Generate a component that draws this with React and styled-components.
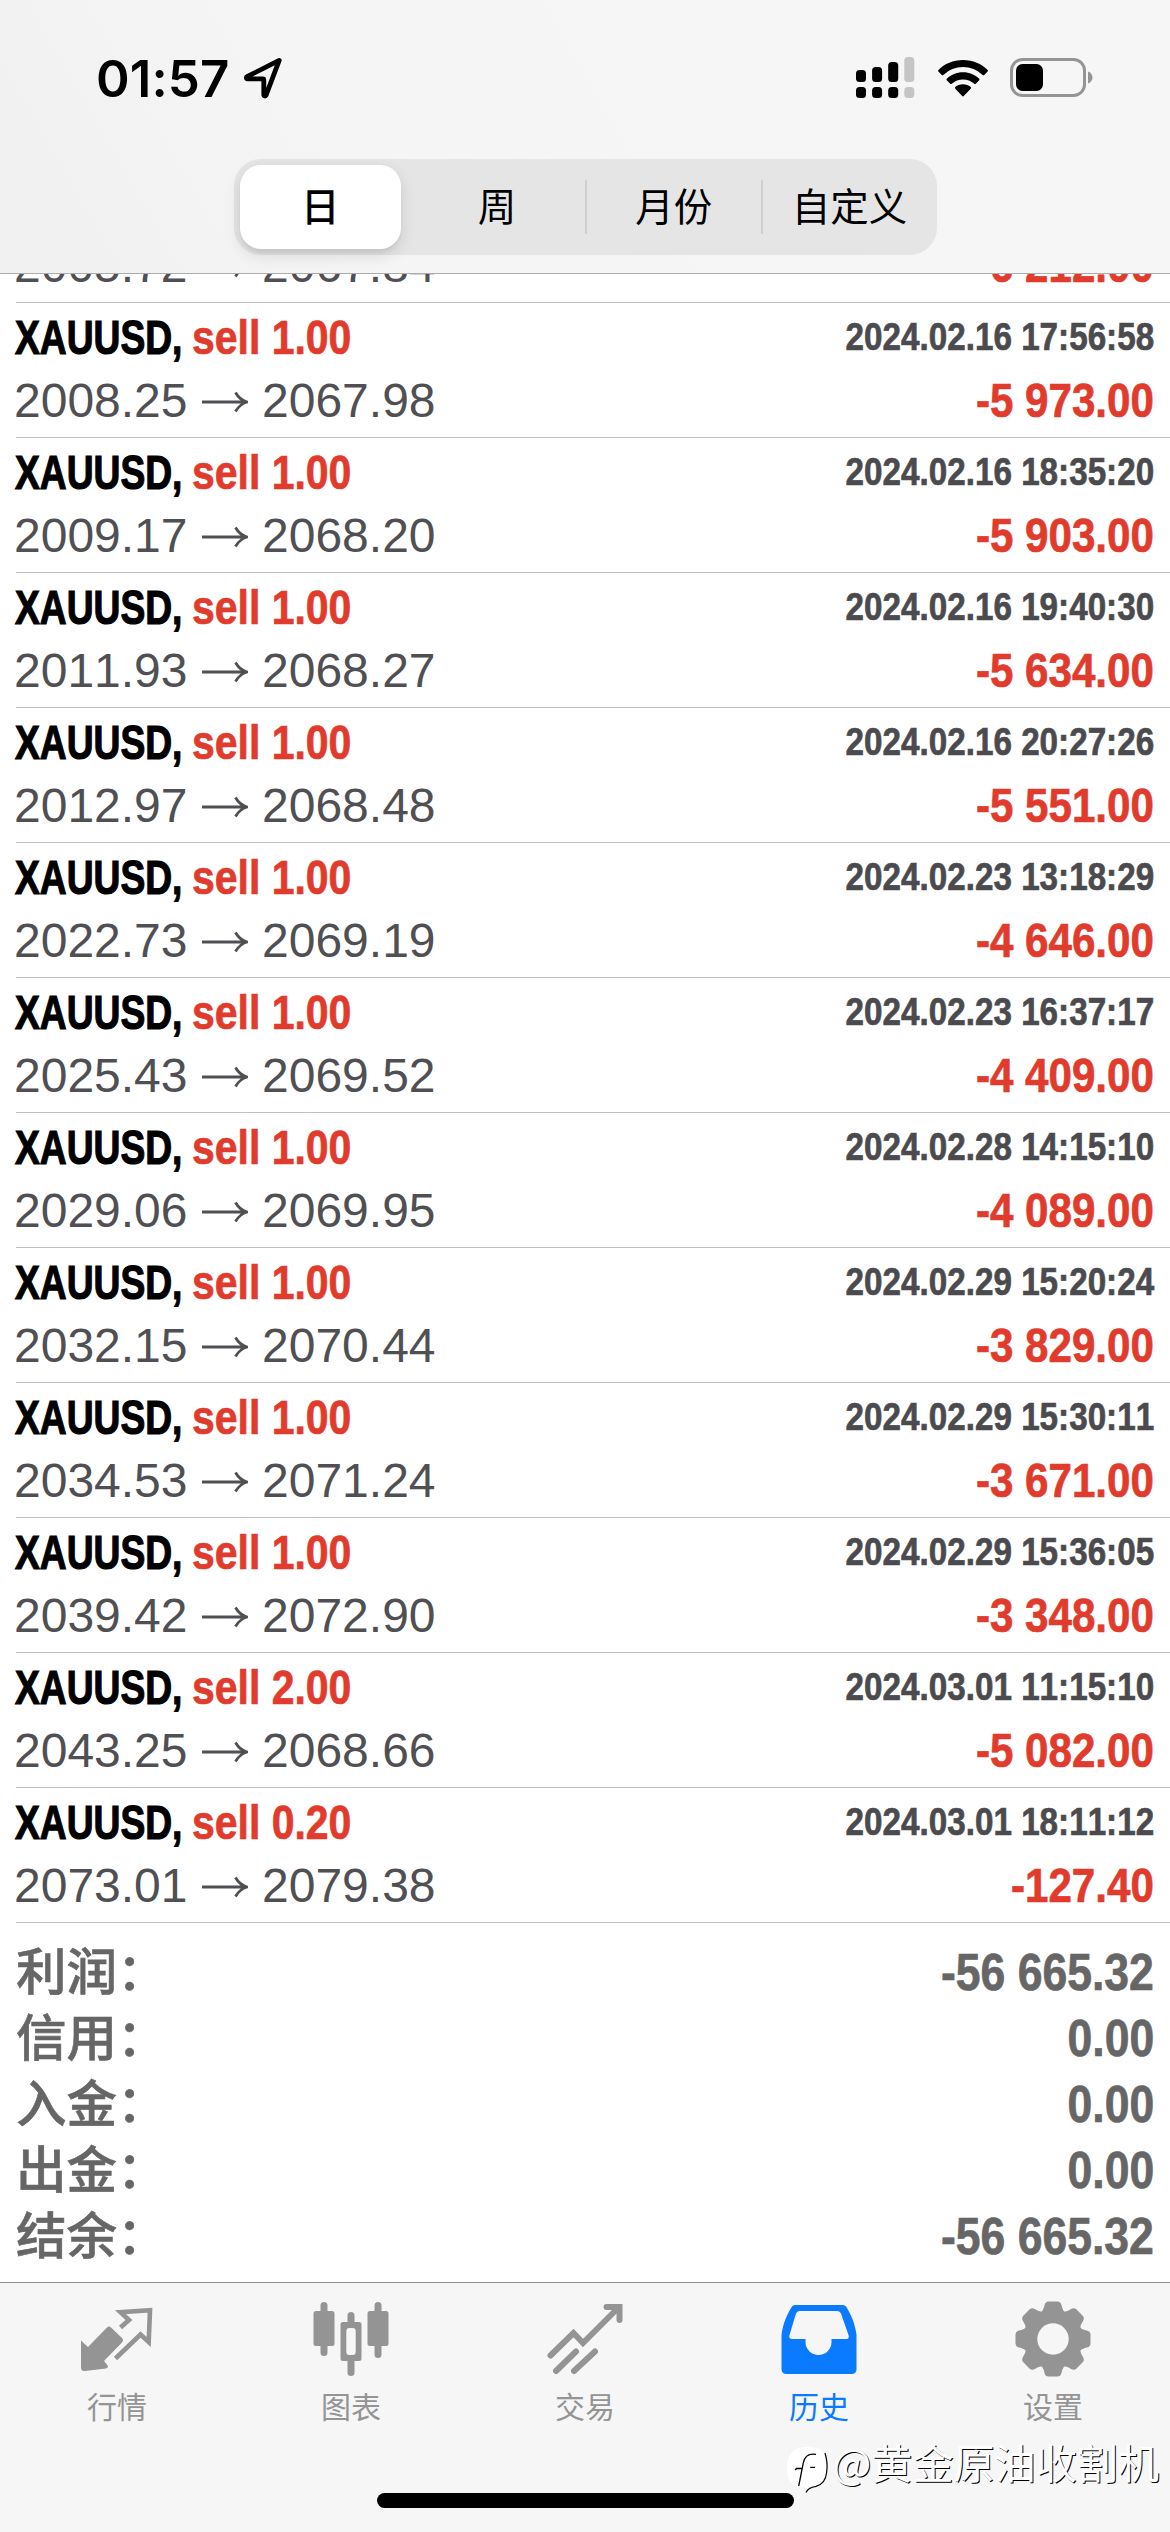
import React from "react";
import styled, { createGlobalStyle } from "styled-components";

const GlobalStyle = createGlobalStyle`
  html, body { margin: 0; padding: 0; background: #fff; }
  *, *::before, *::after { box-sizing: border-box; }
`;

const latin = `"Liberation Sans", "Noto Sans CJK SC", sans-serif`;
const cjk = `"Noto Sans CJK SC", sans-serif`;

const Screen = styled.div`
  width: 1170px;
  height: 2532px;
  display: flex;
  flex-direction: column;
  overflow: hidden;
  background: #fff;
  font-family: ${latin};
  font-kerning: none;
`;

const Header = styled.header`
  height: 274px;
  flex: none;
  display: flex;
  flex-direction: column;
  align-items: center;
  border-bottom: 1px solid #adadb0;
  background: linear-gradient(60deg, #f0f0f1 0%, #f5f5f5 30%, #f6f6f6 100%);
`;

const StatusBar = styled.div`
  width: 100%;
  height: 159px;
  flex: none;
  padding: 47px 77px 0 96px;
  display: flex;
  justify-content: space-between;
  align-items: flex-start;
`;

const StatusGroup = styled.div`
  height: 62px;
  display: flex;
  align-items: center;
  gap: ${(p) => p.$gap}px;
`;

const Clock = styled.span`
  font: 600 51px/62px Inter, sans-serif;
  letter-spacing: 0.1px;
  font-kerning: normal;
  color: #000;
  padding-top: 1px;
`;

const Segments = styled.nav`
  width: 703px;
  height: 96px;
  flex: none;
  display: grid;
  grid-template-columns: repeat(4, 1fr);
  border-radius: 27px;
  background: #e5e5e6;
  padding: 6px 0;
`;

const Segment = styled.button`
  appearance: none;
  border: 0;
  padding: 0;
  margin: ${(p) => (p.$active ? "0 8px 0 6px" : "0")};
  border-radius: 21px;
  background: ${(p) => (p.$active ? "#fff" : "transparent")};
  box-shadow: ${(p) => (p.$active ? "0 6px 16px rgba(0,0,0,.12), 0 4px 3px rgba(0,0,0,.04)" : "none")};
  font: ${(p) => (p.$active ? 500 : 400)} 38.5px/78px ${cjk};
  color: #000;
  display: flex;
  align-items: center;
  justify-content: center;
`;

const SegmentLabel = styled.span`
  flex: 1;
  text-align: center;
  padding-bottom: 6px;
`;

const Divider = styled.i`
  width: 2px;
  height: 54px;
  background: #cfcfd1;
`;

const History = styled.main`
  flex: 1;
  min-height: 0;
  display: flex;
  flex-direction: column;
  justify-content: flex-end;
  overflow: hidden;
`;

const Deal = styled.article`
  height: ${(p) => (p.$partial ? 69 : 135)}px;
  flex: none;
  margin-left: 16px;
  padding: ${(p) => (p.$partial ? 0 : 3)}px 16px 0 0;
  border-bottom: 1px solid #c1c1c3;
`;

const Line = styled.div`
  height: 63px;
  display: flex;
  justify-content: space-between;
`;

const Title = styled.div`
  display: flex;
`;

const Condensed = styled.span`
  display: block;
  white-space: nowrap;
  font-weight: 700;
  font-size: ${(p) => p.$size || 48}px;
  line-height: ${(p) => p.$line || 63}px;
  -webkit-text-stroke: 0.7px currentColor;
  transform: scaleX(${(p) => p.$scale});
  transform-origin: ${(p) => p.$origin || "left"} center;
`;

const SymbolName = styled(Condensed)`
  width: 177px;
  margin-left: -1px;
  color: #000;
  -webkit-text-stroke: 1.2px currentColor;
`;

const Side = styled(Condensed)`
  color: #e03b2c;
`;

const Stamp = styled(Condensed)`
  color: #4b4b4f;
`;

const Profit = styled(Condensed)`
  color: #e03b2c;
`;

const Prices = styled.div`
  display: flex;
  align-items: center;
  font-size: 48px;
  line-height: 63px;
  color: #505054;
  margin-left: -2px;
`;

const ArrowBox = styled.svg`
  width: 46px;
  height: 22px;
  margin: 2px 14px 0 14.5px;
  flex: none;
`;

const Totals = styled.section`
  height: 359px;
  flex: none;
  padding: 17px 16px 0 16px;
`;

const TotalRow = styled.div`
  height: 66px;
  display: flex;
  justify-content: space-between;
  color: #666;
`;

const TotalLabel = styled.span`
  font: 500 50.5px/57px ${cjk};
  -webkit-text-stroke: 0.6px currentColor;
`;

const TabBar = styled.footer`
  height: 250px;
  flex: none;
  position: relative;
  border-top: 1px solid #8f8f93;
  background: #f6f6f6;
  display: flex;
  flex-direction: column;
  align-items: center;
`;

const Tabs = styled.nav`
  width: 100%;
  height: 210px;
  flex: none;
  display: grid;
  grid-template-columns: repeat(5, 1fr);
`;

const Tab = styled.a`
  display: flex;
  flex-direction: column;
  align-items: center;
  padding-top: 18px;
  color: ${(p) => (p.$active ? "#0a7aff" : "#949494")};

  svg { width: 76px; height: 76px; margin-right: 1px; }
`;

const TabLabel = styled.span`
  margin-top: 6px;
  font: 400 30px/44px ${cjk};
`;

const HomeIndicator = styled.div`
  width: 417px;
  height: 15px;
  border-radius: 8px;
  background: #000;
`;

const Watermark = styled.div`
  position: absolute;
  right: 11px;
  top: 153px;
  height: 60px;
  display: flex;
  align-items: flex-start;
  gap: 3px;
  font: 400 41.1px/50px ${cjk};
  color: #fff;
  text-shadow: 1px 1px 0.5px #000;

  svg { margin-top: 9px; }
`;

const ClockArrow = () => (
  <svg width="40" height="42" viewBox="0 0 40 42">
    <path d="M36.2 3.4 4 19.6c-1 .6-.7 2.2.5 2.2h15.3c.6 0 1 .4 1 1v15c0 1.3 1.7 1.6 2.2.5Z" fill="none" stroke="#000" strokeWidth="4.8" strokeLinejoin="round" />
  </svg>
);

const Signal = () => (
  <svg width="59" height="42" viewBox="0 0 59 42">
    {[13, 10, 5, 0].map((top, i) => (
      <g key={top} fill={i === 3 ? "#c5c5c6" : "#000"}>
        <rect x={i * 16.1} y={top} width="10" height={25 - top} rx="3.5" />
        <rect x={i * 16.1} y="30" width="10" height="11" rx="3.5" />
      </g>
    ))}
  </svg>
);

const Wifi = () => (
  <svg width="50" height="37" viewBox="0 0 50 37">
    <path d="M25 0C34.8 0 43.5 3.8 49.6 9.9c.5.5.5 1.1 0 1.6l-3.3 3.4c-.5.5-1.1.5-1.6 0A28.5 28.5 0 0 0 5.3 14.9c-.5.5-1.1.5-1.6 0L.4 11.5c-.5-.5-.5-1.1 0-1.6C6.5 3.8 15.2 0 25 0Z" />
    <path d="M25 12.3c6.4 0 12 2.5 16.2 6.4.5.5.5 1.1 0 1.6l-3.4 3.4c-.5.5-1 .5-1.6 0a16.8 16.8 0 0 0-22.4 0c-.6.5-1.1.5-1.6 0l-3.4-3.4c-.5-.5-.5-1.1 0-1.6 4.2-3.9 9.8-6.4 16.2-6.4Z" />
    <path d="M25 24.3c3 0 5.6 1 7.7 2.8.5.5.5 1.1 0 1.6l-6.9 7.3c-.5.5-1.1.5-1.6 0l-6.9-7.3c-.5-.5-.5-1.1 0-1.6 2.1-1.8 4.7-2.8 7.7-2.8Z" />
  </svg>
);

const Battery = () => (
  <svg width="83" height="40" viewBox="0 0 83 40">
    <rect x="1.5" y="1.5" width="73" height="36" rx="11" fill="none" stroke="#949495" strokeWidth="3" />
    <rect x="6" y="6" width="27" height="27" rx="6.5" />
    <path d="M78 13.500c3 1.200 4.500 3.400 4.500 6s-1.500 4.800-4.500 6Z" fill="#949495" />
  </svg>
);

const LongArrow = () => (
  <ArrowBox viewBox="0 0 46 22" fill="none" stroke="#505054" strokeWidth="2.8">
    <path d="M0 11H44M33.5 1.500C36 6 40 9.500 45 11C40 12.500 36 16 33.500 20.500" />
  </ArrowBox>
);

const QuotesIcon = () => (
  <svg viewBox="0 0 76 76" fill="none">
    <path d="M2 39.500 9 46 28 26.500Q30 24.500 32 26.500L43 37Q45 39 43 41.500L25 60 29 65Q29 67 27 67.500L6 70Q2 70.500 2 66.500Z" fill="currentColor" />
    <path d="M41.500 26.500 50 19 41.500 11.300 71 9.300 69.700 41 61.500 33.500 36.500 57.500" stroke="currentColor" strokeWidth="4.6" />
  </svg>
);

const ChartIcon = () => (
  <svg viewBox="0 0 76 76" fill="currentColor">
    <rect x="7.5" y="1" width="7" height="54" rx="3.5" />
    <rect x="0.5" y="10" width="21" height="35" rx="2.5" />
    <rect x="34.5" y="11" width="7" height="64" rx="3.5" />
    <rect x="27.5" y="21" width="21" height="39" rx="2.5" />
    <rect x="33.3" y="27" width="9.4" height="27" rx="3" fill="#f6f6f6" />
    <rect x="61.5" y="1" width="7" height="56" rx="3.5" />
    <rect x="54.5" y="10" width="21" height="35" rx="2.5" />
  </svg>
);

const TradeIcon = () => (
  <svg viewBox="0 0 76 76" fill="none" stroke="currentColor" strokeWidth="6" strokeLinecap="round">
    <path d="M3.500 54.500 26.500 32 36 42 70 8" />
    <path d="M59.500 6H72.500V19" strokeLinejoin="miter" />
    <path d="M9 70 29 50.500M27 70 48 50.500" />
    <path d="M65 6H73V14Z" fill="currentColor" strokeWidth="1" />
  </svg>
);

const HistoryIcon = () => (
  <svg viewBox="0 0 76 76">
    <path
      fill="currentColor"
      fillRule="evenodd"
      d="M13.500 4H62Q64 4 65 5.500C70 13 74.500 24 75.500 34V68Q75.500 73 70.500 73H5.500Q.5 73 .5 68V34C1.500 24 6 13 11 5.500Q12 4 13.500 4ZM18.500 10Q16 10 15 12.500L8.500 34Q7.500 38 11 38H24.500V41A13 13 0 0 0 50.500 41V38H65.500Q68.500 38 67.500 34L60 12.500Q59 10 56.500 10Z"
    />
  </svg>
);

const GearIcon = () => (
  <svg viewBox="-38 -38 76 76" fill="currentColor">
    {[0, 45, 90, 135, 180, 225, 270, 315].map((a) => (
      <path key={a} transform={`rotate(${a})`} d="M-14-25C-10-28-9.500-30-8.500-34Q-7.500-37.500-4.500-37.500H4.500Q7.500-37.500 8.500-34C9.500-30 10-28 14-25V-14H-14Z" />
    ))}
    <circle r="29.5" />
    <circle r="15.7" fill="#f6f6f6" />
  </svg>
);

const WatermarkLogo = () => (
  <svg width="43" height="50" viewBox="0 0 43 50" fill="none">
    <path d="M20 2C35 1.500 41 7 41 20C41 35 38 41 27 42.500Q22 43.500 20 48L19 42C7 42 1 37 1 23C1 9 7 2.500 20 2Z" fill="#fff" />
    <path d="M39 8Q42 18 40.700 27Q39.500 39 30 41.300Q22 42.500 20 47.500" stroke="#000" strokeWidth="1.2" />
    <path d="M30 9.300C22 8 18.500 11 17.300 18L12.700 41M9.300 25 10.500 23.500H16.700M24.300 22.300H29" stroke="#000" strokeWidth="1.3" />
  </svg>
);

const periods = ["日", "周", "月份", "自定义"];

const deals = [
  { open: "2005.72", close: "2067.84", profit: "-6 212.00" },
  { volume: "1.00", open: "2008.25", close: "2067.98", time: "2024.02.16 17:56:58", profit: "-5 973.00" },
  { volume: "1.00", open: "2009.17", close: "2068.20", time: "2024.02.16 18:35:20", profit: "-5 903.00" },
  { volume: "1.00", open: "2011.93", close: "2068.27", time: "2024.02.16 19:40:30", profit: "-5 634.00" },
  { volume: "1.00", open: "2012.97", close: "2068.48", time: "2024.02.16 20:27:26", profit: "-5 551.00" },
  { volume: "1.00", open: "2022.73", close: "2069.19", time: "2024.02.23 13:18:29", profit: "-4 646.00" },
  { volume: "1.00", open: "2025.43", close: "2069.52", time: "2024.02.23 16:37:17", profit: "-4 409.00" },
  { volume: "1.00", open: "2029.06", close: "2069.95", time: "2024.02.28 14:15:10", profit: "-4 089.00" },
  { volume: "1.00", open: "2032.15", close: "2070.44", time: "2024.02.29 15:20:24", profit: "-3 829.00" },
  { volume: "1.00", open: "2034.53", close: "2071.24", time: "2024.02.29 15:30:11", profit: "-3 671.00" },
  { volume: "1.00", open: "2039.42", close: "2072.90", time: "2024.02.29 15:36:05", profit: "-3 348.00" },
  { volume: "2.00", open: "2043.25", close: "2068.66", time: "2024.03.01 11:15:10", profit: "-5 082.00" },
  { volume: "0.20", open: "2073.01", close: "2079.38", time: "2024.03.01 18:11:12", profit: "-127.40" },
];

const totals = [
  ["利润：", "-56 665.32"],
  ["信用：", "0.00"],
  ["入金：", "0.00"],
  ["出金：", "0.00"],
  ["结余：", "-56 665.32"],
];

const tabs = [
  ["行情", QuotesIcon],
  ["图表", ChartIcon],
  ["交易", TradeIcon],
  ["历史", HistoryIcon],
  ["设置", GearIcon],
];

export default function App() {
  return (
    <Screen>
      <GlobalStyle />
      <Header>
        <StatusBar>
          <StatusGroup $gap={14}>
            <Clock>01:57</Clock>
            <ClockArrow />
          </StatusGroup>
          <StatusGroup $gap={22.5}>
            <Signal />
            <Wifi />
            <Battery />
          </StatusGroup>
        </StatusBar>
        <Segments>
          {periods.map((name, i) => (
            <Segment key={name} $active={i === 0}>
              {i > 1 && <Divider />}
              <SegmentLabel>{name}</SegmentLabel>
            </Segment>
          ))}
        </Segments>
      </Header>
      <History>
        {deals.map(({ volume, open, close, time, profit }) => (
          <Deal key={open} $partial={!time}>
            {time && (
              <Line>
                <Title>
                  <SymbolName $scale={0.775}>XAUUSD,</SymbolName>
                  <Side $scale={0.853}>sell {volume}</Side>
                </Title>
                <Stamp $size={39} $line={62} $scale={0.852} $origin="right">{time}</Stamp>
              </Line>
            )}
            <Line>
              <Prices>
                {open}
                <LongArrow />
                {close}
              </Prices>
              <Profit $scale={0.877} $origin="right">{profit}</Profit>
            </Line>
          </Deal>
        ))}
        <Totals>
          {totals.map(([label, value]) => (
            <TotalRow key={label}>
              <TotalLabel>{label}</TotalLabel>
              <Condensed $size={51} $line={66} $scale={0.873} $origin="right">{value}</Condensed>
            </TotalRow>
          ))}
        </Totals>
      </History>
      <TabBar>
        <Tabs>
          {tabs.map(([name, Icon]) => (
            <Tab key={name} $active={name === "历史"}>
              <Icon />
              <TabLabel>{name}</TabLabel>
            </Tab>
          ))}
        </Tabs>
        <HomeIndicator />
        <Watermark>
          <WatermarkLogo />
          <span>@黄金原油收割机</span>
        </Watermark>
      </TabBar>
    </Screen>
  );
}
